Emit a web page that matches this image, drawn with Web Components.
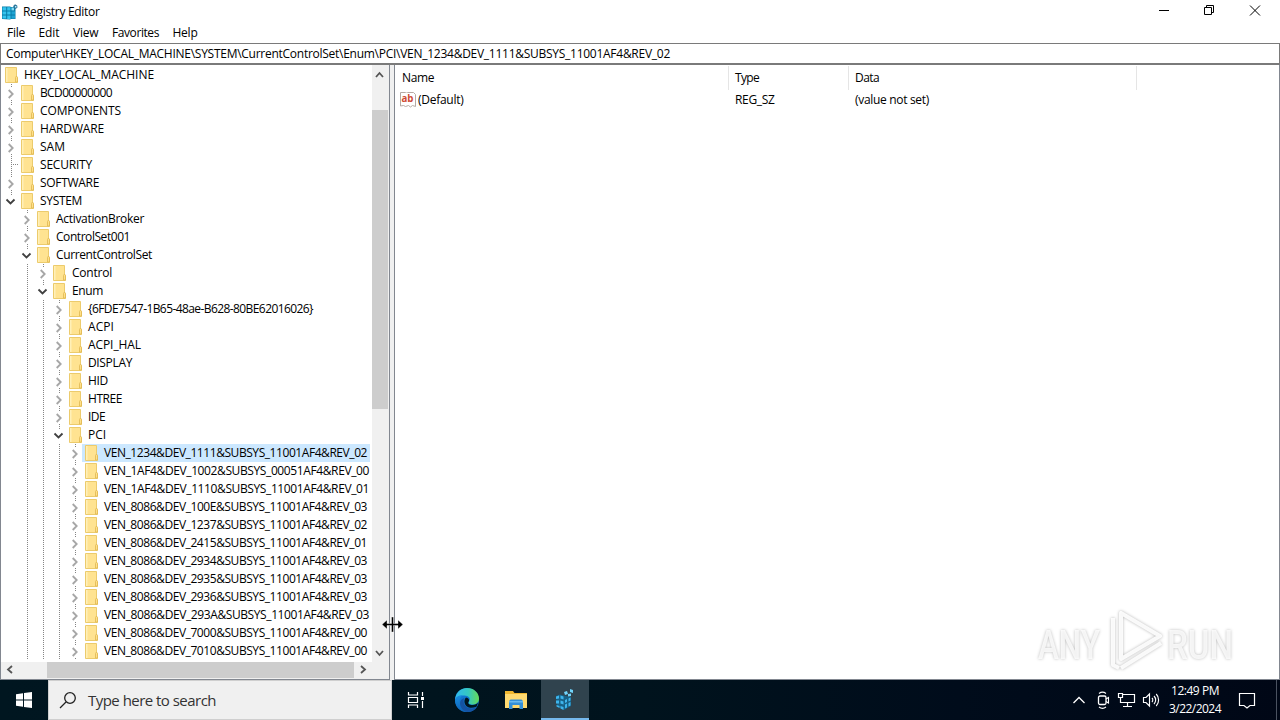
<!DOCTYPE html>
<html lang="en">
<head>
<meta charset="utf-8">
<title>Registry Editor</title>
<style>
    html, body {
        margin: 0;
        width: 1280px;
        height: 720px;
        overflow: hidden;
        background: #fff;
        font: 12px/18px "Open Sans", "Noto Sans", sans-serif;
        color: #000;
    }
</style>
</head>
<body>
<desktop-screen></desktop-screen>

<script>
// Creates the shadow root of an element and fills it
function render(host, html) {
    const shadow = host.attachShadow({mode: 'open'});
    const template = document.createElement('template');
    template.innerHTML = html;
    shadow.appendChild(template.content.cloneNode(true));
    return shadow;
}

// One line of text, tracked so that it takes the given width
class UiText extends HTMLElement {
    connectedCallback() {
        if (this.shadowRoot) return;
        const shadow = render(this, '<style>:host { display: block; flex: none; } span { display: inline-block; white-space: nowrap; vertical-align: top; }</style><span><slot></slot></span>');
        const span = shadow.querySelector('span');
        const width = Number(this.getAttribute('w'));
        const length = this.textContent.length;
        if (width && length > 1) {
            const natural = span.getBoundingClientRect().width;
            span.style.letterSpacing = (width - natural) / length + 'px';
        }
    }
}
customElements.define('ui-text', UiText);

class RegIcon extends HTMLElement {
    connectedCallback() {
        const size = this.getAttribute('size') || 16;
        render(this, `
            <style>:host { display: block; flex: none; } svg { display: block; }</style>
            <svg width="${size}" height="${size}" viewBox="0 0 16 16">
                <path d="M0 2.500h8l1 .5h4.500v12H9l-1 .5L0 15z" fill="#087da8"/>
                <path d="M.5 3.200h3.700v3.200H.5zM5.200 3.200h3.300v3.200H5.200zM.5 7.400h3.700v3.200H.5zM5.200 7.400h3.300v3.200H5.200zM.5 11.600h3.700v3H.5zM5.200 11.600h3.300v3.300H5.200z" fill="#35c3ed"/>
                <path d="M9.500 7.400H13v3.200H9.500zM9.500 11.600H13v2.800H9.500z" fill="#1fa4d3"/>
                <path d="M9.500 3.500H12v2.900H9.500z" fill="#83dcf7"/>
                <path d="M13 .3l2.200 1.200.3 2-1.800 1.600-2.200-1-.3-2z" fill="#2d779b"/>
                <path d="M13 2h1.400v1.500H13z" fill="#b7eaff"/>
            </svg>
        `);
    }
}
customElements.define('reg-icon', RegIcon);

class TitleBar extends HTMLElement {
    connectedCallback() {
        render(this, `
            <style>
                :host { display: flex; height: 23px; align-items: center; padding: 0 2px; box-sizing: border-box; background: #fff; }
                reg-icon { margin-right: 5px; }
                .buttons { margin-left: auto; display: flex; align-self: flex-start; }
                .buttons svg { display: block; width: 46px; height: 22px; }
                path { fill: none; stroke: #000; }
            </style>
            <reg-icon></reg-icon>
            <ui-text w="76.500">Registry Editor</ui-text>
            <div class="buttons">
                <svg viewBox="0 0 46 22"><path d="M19 10.500h10"/></svg>
                <svg viewBox="0 0 46 22"><path d="M18.500 7.500h7v7h-7zM20.500 7.500v-2h7v7h-2"/></svg>
                <svg viewBox="0 0 46 22"><path d="M18 5.500l10 10M28 5.500l-10 10"/></svg>
            </div>
        `);
    }
}
customElements.define('title-bar', TitleBar);

class MenuBar extends HTMLElement {
    connectedCallback() {
        render(this, `
            <style>
                :host { display: flex; height: 20px; padding-left: 7px; gap: 13.500px; align-items: center; box-sizing: border-box; }
            </style>
            <ui-text w="18">File</ui-text>
            <ui-text w="21">Edit</ui-text>
            <ui-text w="25.500">View</ui-text>
            <ui-text w="47">Favorites</ui-text>
            <ui-text w="25">Help</ui-text>
        `);
    }
}
customElements.define('menu-bar', MenuBar);

class AddressBar extends HTMLElement {
    connectedCallback() {
        const path = this.getAttribute('path').replace(/&/g, '&amp;');
        render(this, `
            <style>
                :host { display: block; height: 22px; box-sizing: border-box; border: 1px solid #7a7a7a; border-bottom-width: 2px; padding: 1px 0 0 5px; }
            </style>
            <ui-text w="664">${path}</ui-text>
        `);
    }
}
customElements.define('address-bar', AddressBar);

// Tree row: guide cells, folder and key name
class TreeRow extends HTMLElement {
    connectedCallback() {
        const depth = Number(this.getAttribute('depth'));
        const state = this.getAttribute('state');
        let guides = '';
        for (let level = 1; level <= depth; level++) {
            if (level < depth) {
                guides += level === 1 ? '<svg></svg>' : '<svg><path class="dots" d="M8.500 0v18"/></svg>';
            } else if (state === 'leaf') {
                guides += '<svg><path class="dots" d="M8.500 0v18M8 8.500h7"/></svg>';
            } else if (state === 'open') {
                guides += '<svg><path class="dots" d="M8.500 0v3"/><path class="open" d="M3.500 7.500l4 4 4-4"/></svg>';
            } else {
                guides += '<svg><path class="dots" d="M8.500 0v3M8.500 16v2"/><path class="closed" d="M5.700 6l4 4-4 4"/></svg>';
            }
        }
        render(this, `
            <style>
                :host { display: flex; height: 18px; width: 369px; padding-left: 2px; box-sizing: border-box; }
                svg { display: block; width: 16px; height: 18px; flex: none; }
                path { fill: none; }
                .dots { stroke: #858585; stroke-dasharray: 1 1; }
                .open { stroke: #404040; stroke-width: 1.800; }
                .closed { stroke: #a6a6a6; stroke-width: 1.800; }
                .node { display: flex; flex: 1; margin-left: -1px; padding-left: 3px; gap: 6px; }
                .node.selected { background: #cce8ff; }
                .node svg { width: 13px; }
            </style>
            ${guides}
            <div class="node ${this.hasAttribute('selected') ? 'selected' : ''}">
                <svg viewBox="0 0 13 18">
                    <path d="M.5 1.500h11v9l1 1v5H.5z" style="fill:#ffe391;stroke:#eccb6c"/>
                    <path d="M1 2h1.500v14H1z" style="fill:#fff0b8"/>
                    <path d="M10.500 16v-4.500l1-1.500 1 1.500V16z" style="fill:#ffe08a;stroke:#dfb852;stroke-width:.8"/>
                </svg>
                <ui-text w="${this.getAttribute('w')}">${this.getAttribute('name').replace(/&/g, '&amp;')}</ui-text>
            </div>
        `);
    }
}
customElements.define('tree-row', TreeRow);

class ScrollBar extends HTMLElement {
    connectedCallback() {
        const vertical = this.hasAttribute('vertical');
        render(this, `
            <style>
                :host { display: flex; flex-direction: ${vertical ? 'column' : 'row'}; background: #f0f0f0; flex: none; }
                svg { display: block; width: 17px; height: 17px; flex: none; }
                path { fill: none; stroke: #555; stroke-width: 1.800; }
                .gap { flex: none; ${vertical ? 'height' : 'width'}: ${this.getAttribute('before')}px; }
                .thumb { flex: none; background: #cdcdcd; ${vertical ? 'height' : 'width'}: ${this.getAttribute('thumb')}px; }
                .end { ${vertical ? 'margin-top: auto' : ''}; }
            </style>
            <svg><path d="${vertical ? 'M4 12l3.500-4 3.500 4' : 'M11 4l-4 3.500 4 3.500'}"/></svg>
            <div class="gap"></div>
            <div class="thumb"></div>
            <svg class="end"><path d="${vertical ? 'M4 6l3.500 4L11 6' : 'M7 4l4 3.500L7 11'}"/></svg>
        `);
    }
}
customElements.define('scroll-bar', ScrollBar);

const KEYS = [
    ['HKEY_LOCAL_MACHINE', 0, 'root', 130],
    ['BCD00000000', 1, 'closed', 72],
    ['COMPONENTS', 1, 'closed', 81],
    ['HARDWARE', 1, 'closed', 64],
    ['SAM', 1, 'closed', 25],
    ['SECURITY', 1, 'leaf', 52],
    ['SOFTWARE', 1, 'closed', 59],
    ['SYSTEM', 1, 'open', 42],
    ['ActivationBroker', 2, 'closed', 88],
    ['ControlSet001', 2, 'closed', 74],
    ['CurrentControlSet', 2, 'open', 96],
    ['Control', 3, 'closed', 40],
    ['Enum', 3, 'open', 31],
    ['{6FDE7547-1B65-48ae-B628-80BE62016026}', 4, 'closed', 225],
    ['ACPI', 4, 'closed', 26],
    ['ACPI_HAL', 4, 'closed', 53],
    ['DISPLAY', 4, 'closed', 44],
    ['HID', 4, 'closed', 20],
    ['HTREE', 4, 'closed', 34],
    ['IDE', 4, 'closed', 17],
    ['PCI', 4, 'open', 18],
    ['VEN_1234&DEV_1111&SUBSYS_11001AF4&REV_02', 5, 'closed', 263],
    ['VEN_1AF4&DEV_1002&SUBSYS_00051AF4&REV_00', 5, 'closed', 265],
    ['VEN_1AF4&DEV_1110&SUBSYS_11001AF4&REV_01', 5, 'closed', 265],
    ['VEN_8086&DEV_100E&SUBSYS_11001AF4&REV_03', 5, 'closed', 263],
    ['VEN_8086&DEV_1237&SUBSYS_11001AF4&REV_02', 5, 'closed', 263],
    ['VEN_8086&DEV_2415&SUBSYS_11001AF4&REV_01', 5, 'closed', 263],
    ['VEN_8086&DEV_2934&SUBSYS_11001AF4&REV_03', 5, 'closed', 263],
    ['VEN_8086&DEV_2935&SUBSYS_11001AF4&REV_03', 5, 'closed', 263],
    ['VEN_8086&DEV_2936&SUBSYS_11001AF4&REV_03', 5, 'closed', 263],
    ['VEN_8086&DEV_293A&SUBSYS_11001AF4&REV_03', 5, 'closed', 265],
    ['VEN_8086&DEV_7000&SUBSYS_11001AF4&REV_00', 5, 'closed', 263],
    ['VEN_8086&DEV_7010&SUBSYS_11001AF4&REV_00', 5, 'closed', 263]
];

class KeyTree extends HTMLElement {
    connectedCallback() {
        const rows = KEYS.map(([name, depth, state, w], i) => `
            <tree-row name="${name.replace(/&/g, '&amp;')}" depth="${depth}" state="${state}" w="${w}" ${i === 21 ? 'selected' : ''}></tree-row>
        `).join('');
        render(this, `
            <style>
                :host { display: flex; flex-direction: column; width: 390px; box-sizing: border-box; border: solid #828790; border-width: 0 1px 1px; background: #f0f0f0; }
                .main { display: flex; height: 597px; flex: none; }
                .rows { width: 371px; padding-top: 1px; background: #fff; box-sizing: border-box; }
                .main scroll-bar { width: 16px; }
                .horizontal { height: 16px; width: 371px; }
            </style>
            <div class="main">
                <div class="rows">${rows}</div>
                <scroll-bar vertical before="28" thumb="299"></scroll-bar>
            </div>
            <scroll-bar class="horizontal" before="29" thumb="307"></scroll-bar>
        `);
    }
}
customElements.define('key-tree', KeyTree);

class ValueList extends HTMLElement {
    connectedCallback() {
        render(this, `
            <style>
                :host { display: block; flex: 1; box-sizing: border-box; border: solid #828790; border-width: 0 1px 1px; background: #fff; }
                .row { display: grid; grid-template-columns: 334px 120px 288px; }
                .head { height: 25px; padding-top: 1px; box-sizing: border-box; }
                .head div { border-right: 1px solid #e5e5e5; padding: 3px 0 0 7px; }
                .head div + div { padding-left: 6px; }
                .values { height: 20px; }
                .values div { display: flex; align-items: center; padding-left: 6px; }
                .values .name { padding-left: 5px; gap: 2px; }
                svg { display: block; flex: none; }
            </style>
            <div class="row head">
                <div><ui-text w="32">Name</ui-text></div>
                <div><ui-text w="24">Type</ui-text></div>
                <div><ui-text w="24">Data</ui-text></div>
            </div>
            <div class="row values">
                <div class="name">
                    <svg width="16" height="16" viewBox="0 0 16 16">
                        <path d="M.5 .5h5l1-.5 1 .5h6l2 2v12l-3-1-2 1.500-2-1.500-3 1-2-1-3 .5z" fill="#fff" stroke="#b5aaa5"/>
                        <text x="1.500" y="10" font-family="Open Sans" font-size="10" font-weight="700" fill="#cf4b34" textLength="12" lengthAdjust="spacingAndGlyphs">ab</text>
                    </svg>
                    <ui-text w="45.500">(Default)</ui-text>
                </div>
                <div><ui-text w="39.500">REG_SZ</ui-text></div>
                <div><ui-text w="74">(value not set)</ui-text></div>
            </div>
        `);
    }
}
customElements.define('value-list', ValueList);

class TaskBar extends HTMLElement {
    connectedCallback() {
        render(this, `
            <style>
                :host { display: flex; height: 40px; flex: none; background: linear-gradient(90deg, #001620, #00131d 50%, #000c1b 75%, #000716); color: #fff; }
                svg { display: block; flex: none; }
                .cell { display: flex; align-items: center; justify-content: center; flex: none; }
                .start { width: 48px; }
                .search { display: flex; align-items: center; width: 344px; box-sizing: border-box; background: #f0f0f0; border: 1px solid #cfcfcf; padding-left: 10px; gap: 11px; color: #333; font-size: 15px; }
                .task-view, .explorer, .active { width: 48px; }
                .edge { width: 53px; }
                .explorer svg { margin-right: 2px; }
                .active { background: #30434e; box-shadow: inset 0 -2px #76b9ed; }
                .tray { display: flex; align-items: center; margin-left: auto; }
                .clock { display: flex; flex-direction: column; align-items: center; width: 54px; margin-left: 4px; }
                .note { width: 50px; }
                .peek { width: 4px; height: 40px; border-left: 1px solid #4a5260; box-sizing: border-box; margin-left: 4px; }
                .line { fill: none; stroke: #fff; }
            </style>
            <div class="cell start">
                <svg width="16" height="16" viewBox="0 0 16 16"><path fill="#fff" d="M0 2.200L7 1.200V7.500H0zM8 1l8-1v7.500H8zM0 8.500h7v6.300L0 13.800zM8 8.500h8V16l-8-1z"/></svg>
            </div>
            <div class="search">
                <svg width="18" height="18" viewBox="0 0 18 18"><circle cx="11" cy="7" r="5.300" fill="none" stroke="#222" stroke-width="1.300"/><path d="M7 11L1 17" fill="none" stroke="#222" stroke-width="1.300"/></svg>
                <ui-text w="128">Type here to search</ui-text>
            </div>
            <div class="cell task-view">
                <svg width="18" height="18" viewBox="0 0 18 18"><path class="line" d="M1.500 1v3h9V1M1.500 17v-3h9v3M1.500 6.500h9v5h-9zM15.500 1v4M15.500 10v7" stroke-width="1.200"/><path d="M14 6h3v3h-3z" fill="#fff"/></svg>
            </div>
            <div class="cell edge">
                <svg width="24" height="24" viewBox="0 0 24 24">
                    <defs>
                        <linearGradient id="a" x1="0" x2="1"><stop stop-color="#30b9ef"/><stop offset=".55" stop-color="#35c9c0"/><stop offset="1" stop-color="#66db55"/></linearGradient>
                        <linearGradient id="b" x2="0" y2="1"><stop stop-color="#178ee0"/><stop offset="1" stop-color="#0f62b7"/></linearGradient>
                    </defs>
                    <circle cx="12" cy="12" r="12" fill="#1176cf"/>
                    <path d="M.3 10C1.500 3.500 6.500 0 12 0c7 0 12 5 12 10.500 0 4-3 6-6.500 6-3 0-4.500-1.300-3.500-2.800 2.500-3-.5-6.200-4.500-6.200C5.500 7.500 1.500 9 .3 12z" fill="url(#a)"/>
                    <path d="M0 12c.5-3.500 4.500-5 8-4.700C5 9 3.800 12.500 4.800 16.300 5.700 20 8.500 23 12 24 5 24 0 18.500 0 12z" fill="url(#b)"/>
                    <path d="M9.500 10C7.500 13 9 19.500 15 20.300c2.500.3 5-.3 7-1.300-2 3.200-5.500 5-10 5-4-1-7-4.500-7-9 0-2.500 2-4.500 4.500-5z" fill="#1453a3"/>
                    <path d="M13.500 14c-1 1.500.5 3 4 3 2.500 0 4.500-1 5.500-2.500-.3 1.500-.8 3-1.500 4.200-6 2.500-11 .5-12-4.200-.3-2 .3-3.700 1.500-5 2.300.5 4 2.300 2.500 4.500z" fill="#001620"/>
                </svg>
            </div>
            <div class="cell explorer">
                <svg width="22" height="20" viewBox="0 0 22 20">
                    <path d="M0 1h8l1.500 2H22v15H0z" fill="#f0b72f"/><path d="M0 4h22v14H0z" fill="#ffda70"/>
                    <path d="M4 19v-8l1.500-1.500h11L18 11v8h-3.500v-4h-7v4z" fill="#348fd7"/><path d="M4 11h14v1.500H4z" fill="#68b9ef"/>
                </svg>
            </div>
            <div class="cell active">
                <svg width="20" height="22" viewBox="0 0 20 22">
                    <path d="M1 7l4-1.500 6 1.500 5 1v9l-7 4-7-4z" fill="#176186"/>
                    <path d="M1 7.500l3-1v3l-3 .5zM5.500 6.500l3 1v3l-3-1zM1 11.500h3v3H1zM5.500 11.500l3 1v3l-3-1zM1.500 16l3 1v2l-3-1.500zM5.500 17l3 1v3l-3-1.500zM10 11l2-1v3l-2 1zM13.500 9.500l2-1v3l-2 1zM10 15.500l2-1v4l-2 1zM13.500 14l2-1v3.500l-2 1z" fill="#3eb5ed"/>
                    <path d="M9 3l3-1 1 3-3 1zM15 0l3 1v3l-3-1zM13 5l3-.5v2.500l-3 .5z" fill="#70d3fa"/>
                </svg>
            </div>
            <div class="tray">
                <svg width="26" height="20" viewBox="0 0 26 20"><path class="line" d="M7.500 13l5.500-5.500 5.500 5.500" stroke-width="1.300"/></svg>
                <svg width="24" height="20" viewBox="0 0 24 20"><rect class="line" x="6.500" y="6" width="7.500" height="8.500" rx="1.500" stroke-width="1.300"/><path class="line" d="M14 9l2.500-1.500v5.500L14 11.500M7 3.500c2-1.500 5-1.500 7 0M7 17c2 1.500 5 1.500 7 0" stroke-width="1.100"/></svg>
                <svg width="24" height="20" viewBox="0 0 24 20"><path class="line" d="M7 4.500h11.500v8H4.500V9M11.500 12.500v4M7 16.500h9M2.500 3.500h4v4h-4zM4.500 8v3" stroke-width="1.200"/></svg>
                <svg width="24" height="20" viewBox="0 0 24 20"><path class="line" d="M3.500 7.500H6l3.500-3.500v12L6 12.500H3.500zM12 8c1 1 1 3 0 4M14 6c2.200 2.200 2.200 5.800 0 8M16.200 4c3.200 3.300 3.200 8.700 0 12" stroke-width="1.150"/></svg>
                <div class="clock"><ui-text w="48">12:49 PM</ui-text><ui-text w="52">3/22/2024</ui-text></div>
                <div class="cell note">
                    <svg width="18" height="18" viewBox="0 0 18 18"><path class="line" d="M1.500 2.500h15v12h-4.500l-3 2.500-3-2.500h-4.500z" stroke-width="1.200"/></svg>
                </div>
                <div class="peek"></div>
            </div>
        `);
    }
}
customElements.define('task-bar', TaskBar);

class RunWatermark extends HTMLElement {
    connectedCallback() {
        render(this, `
            <style>
                :host { position: absolute; left: 1030px; top: 600px; }
                svg { display: block; overflow: visible; filter: drop-shadow(0 0 1.500px rgba(0, 0, 0, .32)); }
                text { font: 500 40px Roboto, sans-serif; fill: #fff; fill-opacity: .8; }
                path { fill: none; stroke: #fff; stroke-opacity: .9; stroke-width: 4; stroke-linejoin: round; }
            </style>
            <svg width="240" height="78" viewBox="0 0 240 78">
                <text x="8" y="59" textLength="62" lengthAdjust="spacingAndGlyphs">ANY</text>
                <path d="M91 13v46l39-23zM83 18v47l6 3M91 68l40-25"/>
                <text x="137" y="59" textLength="66" lengthAdjust="spacingAndGlyphs">RUN</text>
            </svg>
        `);
    }
}
customElements.define('run-watermark', RunWatermark);

// Horizontal resize pointer over the splitter
class ResizePointer extends HTMLElement {
    connectedCallback() {
        render(this, `
            <style>:host { position: absolute; left: 382px; top: 616px; } svg { display: block; }</style>
            <svg width="22" height="17" viewBox="0 0 22 17">
                <path d="M0 8.500L5 4v3.500h4.500V1h2v6.500H16V4l5 4.500-5 4.500V9.500h-4.500V16h-2V9.500H5V13z" fill="#000" stroke="#fff" stroke-width=".4"/>
            </svg>
        `);
    }
}
customElements.define('resize-pointer', ResizePointer);

class DesktopScreen extends HTMLElement {
    connectedCallback() {
        render(this, `
            <style>
                :host { display: flex; flex-direction: column; width: 1280px; height: 720px; position: relative; }
                .panes { display: flex; height: 615px; gap: 4px; background: #f0f0f0; }
            </style>
            <title-bar></title-bar>
            <menu-bar></menu-bar>
            <address-bar path="Computer\\HKEY_LOCAL_MACHINE\\SYSTEM\\CurrentControlSet\\Enum\\PCI\\VEN_1234&amp;DEV_1111&amp;SUBSYS_11001AF4&amp;REV_02"></address-bar>
            <div class="panes">
                <key-tree></key-tree>
                <value-list></value-list>
            </div>
            <task-bar></task-bar>
            <run-watermark></run-watermark>
            <resize-pointer></resize-pointer>
        `);
    }
}
customElements.define('desktop-screen', DesktopScreen);
</script>
</body>
</html>
